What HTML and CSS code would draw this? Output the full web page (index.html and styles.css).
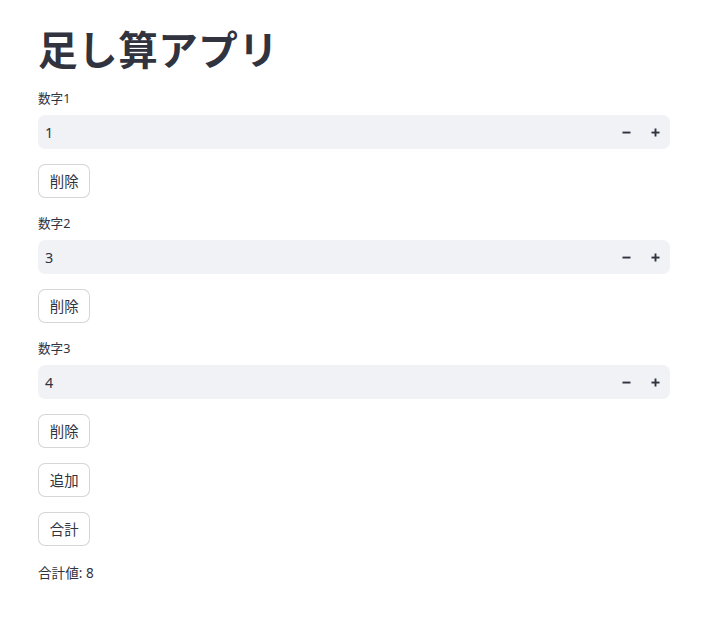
FILE: index.html
```html
<!DOCTYPE html>
<html lang="ja">
<head>
<meta charset="utf-8">
<title>足し算アプリ</title>
<link rel="stylesheet" href="styles.css">
</head>
<body>
<main class="app">
  <h1 class="title">足し算アプリ</h1>

  <div class="field">
    <label class="label">数字1</label>
    <div class="num-input">
      <span class="value">1</span>
      <button class="step" aria-label="minus"><svg width="9" height="9" viewBox="0 0 9 9"><rect x="0.5" y="3.6" width="8" height="1.9" fill="#31333F"/></svg></button>
      <button class="step" aria-label="plus"><svg width="9" height="9" viewBox="0 0 9 9"><rect x="0.5" y="3.6" width="8" height="1.9" fill="#31333F"/><rect x="3.55" y="0.5" width="1.9" height="8" fill="#31333F"/></svg></button>
    </div>
  </div>
  <div><button class="btn">削除</button></div>

  <div class="field">
    <label class="label">数字2</label>
    <div class="num-input">
      <span class="value">3</span>
      <button class="step" aria-label="minus"><svg width="9" height="9" viewBox="0 0 9 9"><rect x="0.5" y="3.6" width="8" height="1.9" fill="#31333F"/></svg></button>
      <button class="step" aria-label="plus"><svg width="9" height="9" viewBox="0 0 9 9"><rect x="0.5" y="3.6" width="8" height="1.9" fill="#31333F"/><rect x="3.55" y="0.5" width="1.9" height="8" fill="#31333F"/></svg></button>
    </div>
  </div>
  <div><button class="btn">削除</button></div>

  <div class="field">
    <label class="label">数字3</label>
    <div class="num-input">
      <span class="value">4</span>
      <button class="step" aria-label="minus"><svg width="9" height="9" viewBox="0 0 9 9"><rect x="0.5" y="3.6" width="8" height="1.9" fill="#31333F"/></svg></button>
      <button class="step" aria-label="plus"><svg width="9" height="9" viewBox="0 0 9 9"><rect x="0.5" y="3.6" width="8" height="1.9" fill="#31333F"/><rect x="3.55" y="0.5" width="1.9" height="8" fill="#31333F"/></svg></button>
    </div>
  </div>
  <div><button class="btn">削除</button></div>

  <div><button class="btn">追加</button></div>
  <div><button class="btn">合計</button></div>

  <p class="result">合計値: 8</p>
</main>
</body>
</html>
```

FILE: styles.css
```css
* { box-sizing: border-box; }

html, body {
  margin: 0;
  padding: 0;
  background: #ffffff;
}

body {
  font-family: "Noto Sans", "Noto Sans CJK JP", sans-serif;
  color: #31333F;
  font-size: 14.4px;
}

.app {
  width: 632px;
  margin-left: 38px;
  display: flex;
  flex-direction: column;
  gap: 14.4px;
  padding-top: 22px;
}

.title {
  margin: 0;
  font-size: 39.6px;
  line-height: 51.5px;
  padding-bottom: 0;
  font-weight: 700;
  color: #31333F;
  font-family: "Noto Sans CJK JP", sans-serif;
  letter-spacing: 0.5px;
}

.field {
  display: flex;
  flex-direction: column;
}

.label {
  font-size: 12.6px;
  line-height: 22.6px;
  margin-bottom: 4.4px;
  color: #31333F;
}

.num-input {
  height: 34.6px;
  background: #f0f2f6;
  border-radius: 7.2px;
  display: flex;
  align-items: center;
  padding-left: 7px;
}

.value {
  flex: 1;
  font-size: 14.4px;
  color: #31333F;
}

.step {
  width: 29px;
  height: 100%;
  border: none;
  background: transparent;
  padding: 0;
  display: flex;
  align-items: center;
  justify-content: center;
}

.btn {
  height: 34.6px;
  padding: 0 10.8px;
  background: #ffffff;
  border: 1px solid rgba(49, 51, 63, 0.2);
  border-radius: 7.2px;
  font-family: "Noto Sans CJK JP", sans-serif;
  font-size: 14.4px;
  color: #31333F;
  line-height: 1;
}

.result {
  margin: 0;
  font-size: 13.6px;
  line-height: 23px;
}
```
